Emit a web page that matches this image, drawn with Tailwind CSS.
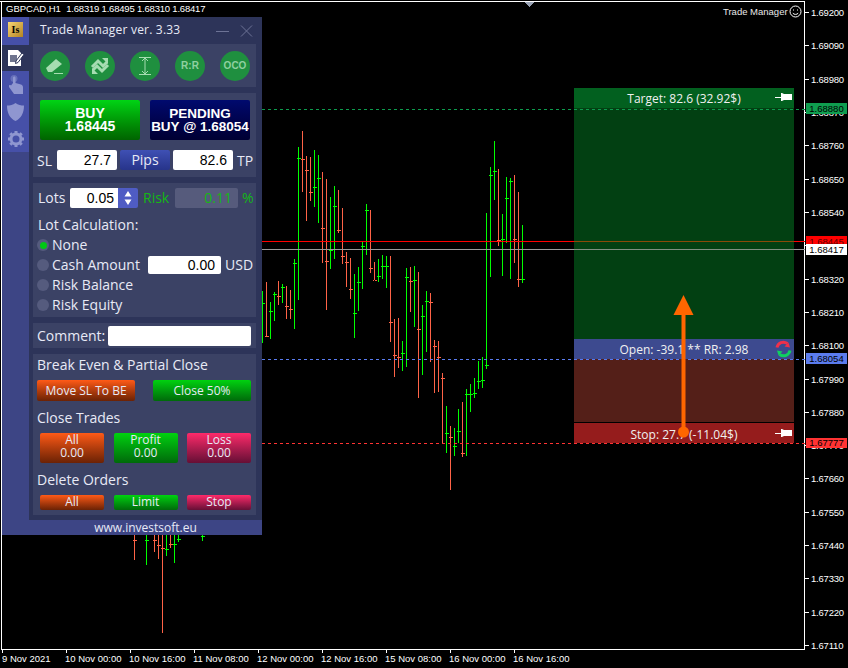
<!DOCTYPE html>
<html lang="en">
<head>
    <meta charset="UTF-8">
    <meta name="viewport" content="width=device-width, initial-scale=1.0">
    <title>Trade Manager</title>
    <script src="https://cdn.jsdelivr.net/npm/@tailwindcss/browser@4"></script>
</head>
<body class="bg-black">
<div class="relative w-[848px] h-[668px] bg-black overflow-hidden font-['Open_Sans',sans-serif] text-white">

    <!-- Chart canvas: bars and axes are filled in by the script below -->
    <svg id="chart" class="absolute inset-0" width="848" height="668" shape-rendering="crispEdges"></svg>

    <!-- Chart labels -->
    <div class="absolute left-[6px] top-[3px] font-['Liberation_Sans',sans-serif] text-[9.5px] leading-[12px] whitespace-pre">GBPCAD,H1  <span class="tracking-[-0.2px]">1.68319 1.68495 1.68310 1.68417</span></div>
    <div class="absolute left-[723px] top-[5px] flex items-center gap-[1px] font-['Liberation_Sans',sans-serif] text-[9.5px] leading-[12px] text-[#e8e8e8]">
        Trade Manager
        <svg width="13" height="13" viewBox="0 0 13 13" fill="none" stroke="#fff"><circle cx="6.5" cy="6.5" r="5.5"/><path d="M4 5h1M8 5h1M3.8 8.2c1.4 1.6 4 1.6 5.4 0"/></svg>
    </div>
    <div id="priceLabels" class="font-['Liberation_Sans',sans-serif] text-[9.5px] leading-[12px] tracking-[-0.2px]"></div>
    <div id="timeLabels" class="font-['Liberation_Sans',sans-serif] text-[9.5px] leading-[12px]"></div>

    <!-- Price tags -->
    <div class="absolute left-[806px] top-[103px] w-[41px] h-[11px] bg-[#0f9d4f] text-black text-center font-['Liberation_Sans',sans-serif] text-[9.5px] leading-[11px]">1.68880</div>
    <div class="absolute left-[806px] top-[236px] w-[41px] h-[9px] bg-[#ff0000] text-[#5a0000] text-center font-['Liberation_Sans',sans-serif] text-[9.5px] leading-[11px] overflow-hidden">1.68445</div>
    <div class="absolute left-[806px] top-[244px] w-[41px] h-[11px] bg-white text-black text-center font-['Liberation_Sans',sans-serif] text-[9.5px] leading-[11px]">1.68417</div>
    <div class="absolute left-[806px] top-[353px] w-[41px] h-[11px] bg-[#5b7cee] text-black text-center font-['Liberation_Sans',sans-serif] text-[9.5px] leading-[11px]">1.68054</div>
    <div class="absolute left-[806px] top-[438px] w-[41px] h-[10px] bg-[#ff3333] text-black text-center font-['Liberation_Sans',sans-serif] text-[9.5px] leading-[10px]">1.67777</div>

    <!-- Risk / reward box -->
    <div class="absolute left-[574px] top-[88px] w-[220px] h-[356px] flex flex-col text-[12px] text-[#f0f0f0]">
        <div class="relative h-[20px] shrink-0 bg-[#02601f] flex items-center justify-center pt-[2px]">
            Target: 82.6 (32.92$)
            <svg class="absolute right-[2px] top-[4px]" width="17" height="11" viewBox="0 0 17 11" fill="#fff"><path d="M0 5h6V1h1l2 1h8v6H9l-2 1H6V6H0z"/></svg>
        </div>
        <div class="h-[231px] shrink-0 bg-[#024012]"></div>
        <div class="relative h-[20px] shrink-0 bg-[#3d4a8f] flex items-center justify-center pt-[2px]">
            Open: -39.1 ** RR: 2.98
            <svg class="absolute right-[2px] top-[1px]" width="17" height="18" viewBox="0 0 17 18" fill="none" stroke-width="3"><path d="M2 7.5C3 3 8 .5 12.5 3.5" stroke="#f0304a"/><path d="M15 7.5l-5.500-1 4-4z" fill="#f0304a"/><path d="M15 10.500C14 15 9 17.500 4.500 14.500" stroke="#10d060"/><path d="M2 10.500l5.500 1-4 4z" fill="#10d060"/></svg>
        </div>
        <div class="h-[64px] shrink-0 bg-[#541f18] border-b border-black"></div>
        <div class="relative h-[20px] shrink-0 bg-[#951c1c] flex items-center justify-center pt-[3px]">
            Stop: 27.7 (-11.04$)
            <svg class="absolute right-[2px] top-[5px]" width="17" height="11" viewBox="0 0 17 11" fill="#fff"><path d="M0 5h6V1h1l2 1h8v6H9l-2 1H6V6H0z"/></svg>
        </div>
    </div>

    <!-- Level lines run across the box -->
    <svg id="levels" class="absolute inset-0" width="848" height="668" shape-rendering="crispEdges"></svg>

    <!-- Orange move arrow -->
    <svg class="absolute left-[670px] top-[292px]" width="28" height="152" viewBox="0 0 28 152" fill="#ff6600">
        <path d="M13.500 3l10 20h-20z"/><rect x="11.500" y="22" width="4" height="118"/><circle cx="13.500" cy="140" r="5.500"/>
    </svg>

    <!-- Trade Manager window -->
    <div class="absolute left-[2px] top-[17px] w-[260px] h-[518px] flex flex-col">
        <div class="flex flex-1 min-h-0">
            <!-- Tab rail -->
            <div class="w-[27px] shrink-0 bg-[#3d4585] flex flex-col">
                <div class="bg-[#4650a8] flex flex-col">
                    <div class="h-[28px] flex items-center justify-center">
                        <div class="w-[15px] h-[15px] mt-[-3px] bg-gradient-to-br from-[#f7d774] to-[#b3831f] text-black font-['Liberation_Serif',serif] font-bold text-[10px] leading-[15px] text-center">Is</div>
                    </div>
                    <div class="h-[26px] bg-[#2d3459] flex items-center justify-center">
                        <svg width="18" height="18" viewBox="0 0 18 18"><path d="M1 1h10l3 3v13H1z" fill="#fff"/><path d="M3 6h7v7H3z" fill="#70758f"/><path d="M9 12l6-8 2 1.500-6 8-2.500 1z" fill="#fff" stroke="#2d3459"/></svg>
                    </div>
                    <div class="h-[27px] flex items-center justify-center">
                        <svg width="14" height="19" viewBox="0 0 14 19" fill="#8f96d0"><path d="M4 8V3c0-2 2.500-2 2.500 0v5l5.500 1.500c1.500.5 2 1.500 2 3V19H5L0 12c-1-1.500.8-2.500 2-1.500z"/><circle cx="5" cy="3.500" r="3.500" opacity=".45"/></svg>
                    </div>
                    <div class="h-[28px] flex items-center justify-center">
                        <svg width="17" height="18" viewBox="0 0 17 18" fill="#8f96d0"><path d="M8.500 0C11 2 14 2.500 17 2.500 17 10 14 15.500 8.500 18 3 15.500 0 10 0 2.500 3 2.500 6 2 8.500 0z"/></svg>
                    </div>
                    <div class="h-[26px] flex items-center justify-center">
                        <svg width="18" height="18" viewBox="0 0 18 18" fill="none" stroke="#8f96d0"><circle cx="9" cy="9" r="5" stroke-width="3"/><path d="M9 1v3M9 14v3M1 9h3M14 9h3M3.300 3.300l2.200 2.200M12.500 12.500l2.200 2.200M3.300 14.700l2.200-2.200M12.500 5.500l2.200-2.200" stroke-width="3"/></svg>
                    </div>
                </div>
            </div>

            <!-- Main column -->
            <div class="flex-1 min-w-0 bg-[#2d3459] pl-[4px] pr-[6px] flex flex-col">
                <div class="h-[27px] shrink-0 flex items-center pl-[7px] text-[12px] text-[#e8eaf6]">
                    <span class="flex-1 mb-[2px] tracking-[0.2px]">Trade Manager ver. 3.33</span>
                    <svg class="mr-[1px]" width="40" height="14" viewBox="0 0 40 14" fill="none" stroke="#6d7396"><path d="M1 7.500h13M26 1.500l11 11M37 1.500l-11 11"/></svg>
                </div>

                <!-- Tool buttons -->
                <div class="h-[43px] shrink-0 bg-[#3b4265] flex items-center justify-between pl-[7px] pr-[6px] font-['Liberation_Sans',sans-serif] font-bold text-[10px] text-[#8fd0a0]">
                    <div class="w-[30px] h-[30px] rounded-full bg-[#1f8f3f] flex items-center justify-center">
                        <svg width="20" height="18" viewBox="0 0 20 18" fill="#a6dcb1"><path d="M1 11L11 2l6 5-10 8H3z"/><path d="M9 16h9v1H9z"/></svg>
                    </div>
                    <div class="w-[30px] h-[30px] rounded-full bg-[#1f8f3f] flex items-center justify-center">
                        <svg width="20" height="20" viewBox="0 0 20 20" fill="none" stroke="#a6dcb1" stroke-width="3"><path d="M2 11l6-6 5 5 4-4"/><path d="M18 9l-6 6-5-5-4 4"/><path d="M12 2h6v6z" fill="#a6dcb1" stroke="none"/><path d="M8 18H2v-6z" fill="#a6dcb1" stroke="none"/></svg>
                    </div>
                    <div class="w-[30px] h-[30px] rounded-full bg-[#1f8f3f] flex items-center justify-center">
                        <svg width="16" height="20" viewBox="0 0 16 20" fill="none" stroke="#a6dcb1"><path d="M2 1.500h12M2 18.500h12M8 2v16M5 5l3-3 3 3M5 15l3 3 3-3"/></svg>
                    </div>
                    <div class="w-[30px] h-[30px] rounded-full bg-[#1f8f3f] flex items-center justify-center">R:R</div>
                    <div class="w-[30px] h-[30px] rounded-full bg-[#1f8f3f] flex items-center justify-center">OCO</div>
                </div>

                <!-- Market / pending -->
                <div class="h-[84px] shrink-0 mt-[6px] bg-[#3b4265] pt-[7px] pl-[4px] flex flex-col">
                    <div class="flex pl-[3px] gap-[10px] font-['Liberation_Sans',sans-serif] font-bold text-[13.5px] leading-[13px] text-center">
                        <div class="w-[100px] h-[40px] rounded-[2px] bg-gradient-to-b from-[#00d414] to-[#006400] flex flex-col items-center justify-center text-[14px]">BUY<br>1.68445</div>
                        <div class="w-[100px] h-[40px] rounded-[2px] bg-gradient-to-b from-[#000a6e] to-[#000033] flex flex-col items-center justify-center whitespace-nowrap">PENDING<br>BUY @ 1.68054</div>
                    </div>
                    <div class="flex items-center mt-[10px] h-[20px] text-[14px] text-[#e8eaf6]">
                        <span class="w-[20px]">SL</span>
                        <div class="w-[60px] h-[20px] bg-white rounded-[2px] text-black text-right pr-[6px] font-['Liberation_Sans',sans-serif] leading-[20px]">27.7</div>
                        <div class="w-[50px] h-[20px] ml-[3px] rounded-[2px] bg-gradient-to-b from-[#3f50b4] to-[#27348a] text-center leading-[20px]">Pips</div>
                        <div class="w-[60px] h-[20px] ml-[3px] bg-white rounded-[2px] text-black text-right pr-[6px] font-['Liberation_Sans',sans-serif] leading-[20px]">82.6</div>
                        <span class="ml-[4px]">TP</span>
                    </div>
                </div>

                <!-- Lots -->
                <div class="h-[134px] shrink-0 mt-[6px] bg-[#3b4265] pt-[5px] pl-[4px] text-[14px] leading-[20px] text-[#e8eaf6]">
                    <div class="flex items-center h-[20px]">
                        <span class="w-[33px] pl-[1px]">Lots</span>
                        <div class="w-[48px] h-[20px] bg-white rounded-l-[2px] text-black text-right pr-[4px] font-['Liberation_Sans',sans-serif]">0.05</div>
                        <div class="w-[20px] h-[20px] bg-[#4f5cc4] rounded-r-[2px] flex items-center justify-center">
                            <svg width="8" height="14" viewBox="0 0 8 14" fill="#fff"><path d="M4 0l3.500 5.500h-7zM4 14l3.500-5.500h-7z"/></svg>
                        </div>
                        <span class="ml-[5px] w-[32px] text-[#14b814]">Risk</span>
                        <div class="w-[63px] h-[20px] bg-[#565b7c] rounded-[2px] text-right pr-[6px] text-[#14b814]">0.11</div>
                        <span class="ml-[4px] text-[#14b814]">%</span>
                    </div>
                    <div class="mt-[7px] pl-[1px]">Lot Calculation:</div>
                    <div class="flex items-center h-[20px]">
                        <span class="w-[12px] h-[12px] mr-[3px] rounded-full bg-[#555b7e] flex items-center justify-center"><span class="w-[7px] h-[7px] rounded-full bg-[#00c814]"></span></span>None
                    </div>
                    <div class="flex items-center h-[20px]">
                        <span class="w-[12px] h-[12px] mr-[3px] rounded-full bg-[#555b7e]"></span>
                        <span class="w-[96px]">Cash Amount</span>
                        <div class="w-[73px] h-[18px] bg-white rounded-[2px] text-black text-right pr-[6px] font-['Liberation_Sans',sans-serif] leading-[18px]">0.00</div>
                        <span class="ml-[4px]">USD</span>
                    </div>
                    <div class="flex items-center h-[20px]">
                        <span class="w-[12px] h-[12px] mr-[3px] rounded-full bg-[#555b7e]"></span>Risk Balance
                    </div>
                    <div class="flex items-center h-[20px]">
                        <span class="w-[12px] h-[12px] mr-[3px] rounded-full bg-[#555b7e]"></span>Risk Equity
                    </div>
                </div>

                <!-- Comment -->
                <div class="h-[25px] shrink-0 mt-[6px] bg-[#3b4265] pl-[4px] flex items-center text-[14px] text-[#e8eaf6]">
                    <span class="w-[71px]">Comment:</span>
                    <div class="w-[143px] h-[20px] bg-white rounded-[2px]"></div>
                </div>

                <!-- Break even and close -->
                <div class="h-[161px] shrink-0 mt-[6px] bg-[#3b4265] pl-[4px] pt-[1px] text-[14px] leading-[20px] text-[#e8eaf6]">
                    <div class="h-[20px]">Break Even &amp; Partial Close</div>
                    <div class="flex justify-between w-[214px] mt-[5px] text-[12px] text-center leading-[21px]">
                        <div class="w-[98px] h-[21px] rounded-[2px] bg-gradient-to-b from-[#ff5a17] to-[#6b2205]">Move SL To BE</div>
                        <div class="w-[98px] h-[21px] rounded-[2px] bg-gradient-to-b from-[#00d20f] to-[#006a0a]">Close 50%</div>
                    </div>
                    <div class="h-[20px] mt-[7px]">Close Trades</div>
                    <div class="flex ml-[3px] w-[211px] justify-between mt-[5px] text-[12px] text-center leading-[13px]">
                        <div class="w-[64px] h-[30px] rounded-[2px] bg-gradient-to-b from-[#ff5a17] to-[#6b2205]">All<br>0.00</div>
                        <div class="w-[64px] h-[30px] rounded-[2px] bg-gradient-to-b from-[#00d20f] to-[#006a0a]">Profit<br>0.00</div>
                        <div class="w-[64px] h-[30px] rounded-[2px] bg-gradient-to-b from-[#ff2a6a] to-[#660f35]">Loss<br>0.00</div>
                    </div>
                    <div class="h-[20px] mt-[7px]">Delete Orders</div>
                    <div class="flex ml-[3px] w-[211px] justify-between mt-[5px] text-[12px] text-center leading-[13px]">
                        <div class="w-[64px] h-[15px] rounded-[2px] bg-gradient-to-b from-[#ff5a17] to-[#6b2205]">All</div>
                        <div class="w-[64px] h-[15px] rounded-[2px] bg-gradient-to-b from-[#00d20f] to-[#006a0a]">Limit</div>
                        <div class="w-[64px] h-[15px] rounded-[2px] bg-gradient-to-b from-[#ff2a6a] to-[#660f35]">Stop</div>
                    </div>
                </div>
            </div>
        </div>
        <div class="h-[15px] shrink-0 bg-[#3d4585] pl-[27px] text-center text-[12px] leading-[15px] text-[#e8eaf6]">www.investsoft.eu</div>
    </div>
</div>

<script>
    const GREEN = '#00ff00';
    const RED = '#ff6347';
    // [x, high y, low y, close y, up]
    const bars = [
        [262,291,343,303,1],[266,282,337,336,0],[270,302,339,311,1],[274,292,321,294,1],[278,281,305,296,0],[282,284,303,287,1],
        [286,286,319,306,0],[290,290,319,309,0],[294,259,329,263,1],[298,147,300,158,1],[302,131,192,159,0],[306,156,221,170,0],
        [310,157,201,192,0],[314,150,207,187,1],[318,155,223,178,1],[322,172,263,228,0],[326,179,310,261,0],[330,197,269,250,1],
        [334,186,259,206,1],[338,190,233,230,0],[342,208,264,256,0],[346,252,287,262,0],[350,258,299,289,0],[354,274,338,313,1],
        [358,267,311,282,1],[362,242,289,246,1],[366,204,255,210,1],[370,210,273,268,0],[374,262,280,280,0],[378,259,282,276,1],
        [382,255,279,266,1],[386,256,288,266,1],[390,256,342,322,0],[394,319,377,355,0],[398,318,368,357,0],[402,341,371,353,1],
        [406,268,367,277,1],[410,267,312,281,0],[414,266,327,280,1],[418,272,398,329,0],[422,305,375,316,1],[426,291,352,301,1],
        [430,293,362,302,0],[434,340,393,346,0],[438,341,392,357,0],[442,373,443,378,0],[446,406,453,433,1],[450,426,490,437,0],
        [454,428,456,446,1],[458,409,443,431,1],[462,402,457,453,0],[466,389,456,394,1],[470,384,412,394,1],[474,378,398,393,1],
        [478,361,389,381,1],[482,357,388,380,1],[486,213,369,365,1],[490,167,277,175,1],[494,141,200,171,1],[498,169,246,240,0],
        [502,214,276,239,1],[506,177,243,198,1],[510,178,279,181,1],[514,175,263,239,0],[518,192,287,279,0],[522,225,283,279,1],
        // bars showing under the window
        [134,530,560,540,0],[146,530,565,540,1],[154,530,552,540,0],[158,530,559,545,0],[162,530,633,548,0],[166,530,556,549,1],
        [170,530,548,544,0],[174,530,563,544,1],[178,530,542,539,1],[202,530,541,536,1]
    ];

    let svg = '';
    const line = (x1, y1, x2, y2, color, extra = '') =>
        `<line x1="${x1}" y1="${y1}" x2="${x2}" y2="${y2}" stroke="${color}" ${extra}/>`;

    // frame and axes
    svg += line(0, 1.5, 805, 1.5, '#fff') + line(1.5, 1, 1.5, 650, '#fff');
    svg += line(804.5, 1, 804.5, 650, '#fff') + line(1, 649.5, 805, 649.5, '#fff');
    svg += '<path d="M525 2h9l-4.500 5z" fill="#9aa3b5"/>';

    // bars
    bars.forEach(([x, top, bottom, close, up]) => {
        const c = up ? GREEN : RED;
        svg += line(x + .5, top, x + .5, bottom, c);
        svg += line(x - 1, close + .5, x, close + .5, c) + line(x + 1, close + .5, x + 3, close + .5, c);
    });

    // price axis
    let priceHtml = '';
    const prices = ['1.69200','1.69090','1.68980','1.68870','1.68760','1.68650','1.68540','1.68430','1.68320','1.68210','1.68100','1.67990','1.67880','1.67770','1.67660','1.67550','1.67440','1.67330','1.67220','1.67110'];
    prices.forEach((p, i) => {
        const y = Math.round(12 + i * 33.32);
        svg += line(805, y + .5, 809, y + .5, '#fff');
        priceHtml += `<div class="absolute left-[811px]" style="top:${y - 5}px">${p}</div>`;
    });
    document.getElementById('priceLabels').innerHTML = priceHtml;

    // time axis
    let timeHtml = '';
    const times = ['9 Nov 2021','10 Nov 00:00','10 Nov 16:00','11 Nov 08:00','12 Nov 00:00','12 Nov 16:00','15 Nov 08:00','16 Nov 00:00','16 Nov 16:00'];
    times.forEach((t, i) => {
        const x = 2 + i * 64;
        svg += line(x + .5, 650, x + .5, 653, '#fff');
        timeHtml += `<div class="absolute top-[653px] whitespace-nowrap" style="left:${i ? x - 1 : x}px">${t}</div>`;
    });
    document.getElementById('timeLabels').innerHTML = timeHtml;

    document.getElementById('chart').innerHTML = svg;

    // levels, dimmer where they pass over the box
    let levels = '';
    levels += line(262, 109.5, 805, 109.5, '#0d9b4d', 'stroke-dasharray="3 3"');
    levels += line(262, 241.5, 574, 241.5, '#ff0000') + line(574, 241.5, 794, 241.5, '#8a4a08') + line(794, 241.5, 805, 241.5, '#ff0000');
    levels += line(262, 249.5, 574, 249.5, '#9a9a9a') + line(574, 249.5, 794, 249.5, '#7f8f7f') + line(794, 249.5, 805, 249.5, '#9a9a9a');
    levels += line(262, 359.5, 805, 359.5, '#5a7cf0', 'stroke-dasharray="3 3"');
    levels += line(262, 443.5, 805, 443.5, '#ff3333', 'stroke-dasharray="3 3"');
    document.getElementById('levels').innerHTML = levels;
</script>
</body>
</html>
